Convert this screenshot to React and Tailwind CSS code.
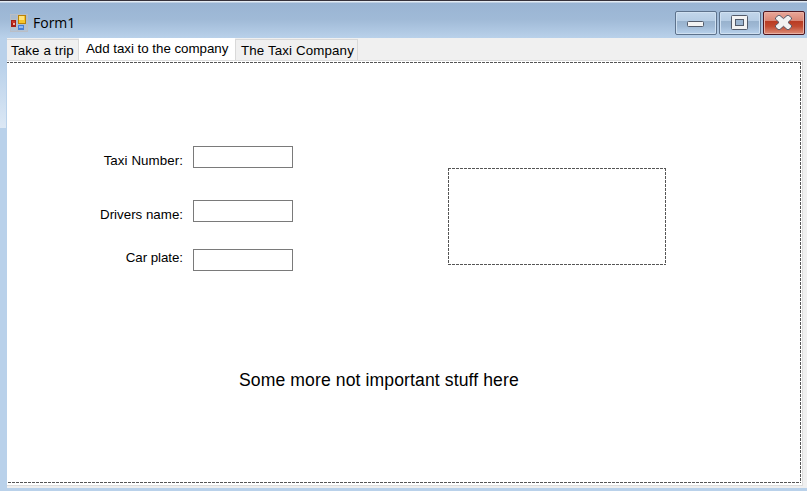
import React from "react";

const dashes =
  "bg-[linear-gradient(90deg,#555_75%,transparent_75%),linear-gradient(90deg,#555_75%,transparent_75%),linear-gradient(180deg,#555_75%,transparent_75%),linear-gradient(180deg,#555_75%,transparent_75%)] bg-[size:4px_1px,4px_1px,1px_4px,1px_4px] [background-repeat:repeat-x,repeat-x,repeat-y,repeat-y]";

function FormIcon() {
  return (
    <svg width="18" height="18" viewBox="0 0 18 18" shapeRendering="crispEdges">
      <path d="M.5 .5h7v5h-7zM.5 13.5h7v4h-7zM7.5 .5h10v17h-10z" fill="#b9bdc4" fillOpacity=".45" stroke="#b9bec6" />
      <rect x="1" y="6" width="5" height="7" fill="#a51d14" />
      <rect x="2" y="7" width="3" height="2" fill="#c93426" />
      <rect x="3" y="9" width="2" height="2" fill="#f3aaa0" />
      <rect x="8" y="1" width="8" height="9" fill="#b98107" />
      <rect x="9" y="2" width="6" height="7" fill="#f6c52c" />
      <rect x="9" y="2" width="5" height="4" fill="#ffe27a" />
      <rect x="8" y="11" width="6" height="5" fill="#477fd4" />
      <rect x="9" y="12" width="4" height="2" fill="#8bb9f8" />
    </svg>
  );
}

function CaptionButton({ close = false, label, children }) {
  return (
    <button
      aria-label={label}
      className={
        "flex h-6 w-[42px] items-start justify-start rounded-[2px] border pt-[3px] pl-[11px] " +
        (close
          ? "border-[#4d1620] bg-[linear-gradient(#e9a799,#d98675_40%,#b83b23_42%,#c14a30_65%,#dd8f7b)] shadow-[inset_0_0_0_1px_#e9b0a4]"
          : "border-[#5d728c] bg-[linear-gradient(#c2d6ea,#b5cce4_40%,#98b2cd_42%,#9fb9d5_65%,#b9d2ec)] shadow-[inset_0_0_0_1px_#cfe0f1]")
      }
    >
      {children}
    </button>
  );
}

function Field({ label, className, labelClass }) {
  return (
    <label className={"flex h-[22px] w-[286px] justify-end " + className}>
      <span className={"mr-[10px] whitespace-nowrap leading-4 " + labelClass}>{label}</span>
      <input className="h-[22px] w-[100px] border border-[#7a7a7a] bg-white outline-none" />
    </label>
  );
}

export default function App() {
  return (
    <div className="flex h-[491px] w-[807px] flex-col overflow-hidden bg-[#b9d1ea] font-['Liberation_Sans',Arial,sans-serif] text-black">
      <header className="flex h-[38px] shrink-0 border-t border-[#35313a] bg-[linear-gradient(#e4ebf3_0px,#e4ebf3_1px,#99b4d3_2px,#a0bad7_50%,#b9d1ea)] pr-[2px] pl-[10px]">
        <div className="mt-[13px] h-[18px]">
          <FormIcon />
        </div>
        <h1 className="mt-[12px] ml-[5px] font-['Open_Sans','Noto_Sans',sans-serif] text-[14px] leading-5">Form1</h1>
        <div className="mt-[10px] ml-auto flex gap-[2px]">
          <CaptionButton label="Minimize">
            <svg width="17" height="16" viewBox="0 0 17 16">
              <rect x=".5" y="6.5" width="16" height="5" rx="1" fill="#f3f3f3" stroke="#535b6a" />
            </svg>
          </CaptionButton>
          <CaptionButton label="Maximize">
            <svg width="17" height="16" viewBox="0 0 17 16">
              <rect x=".5" y=".5" width="16" height="14" rx="1" fill="#f3f3f3" stroke="#535b6a" />
              <rect x="4.5" y="4.5" width="8" height="6" fill="#9db6d1" stroke="#535b6a" />
            </svg>
          </CaptionButton>
          <CaptionButton label="Close" close>
            <svg width="18" height="16" viewBox="0 0 18 16">
              <path
                d="M3.2 .5h1.7L8.5 3.6 12.1.5h1.7l2.7 2.3v1.3L13 7.4l3.5 3.2v1.5l-2.6 2.4h-1.8l-3.6-3.2-3.6 3.2H3.1L.5 12.1v-1.5L4 7.4.5 4.1V2.8z"
                fill="#f1f1f1"
                stroke="#535666"
                strokeLinejoin="round"
              />
            </svg>
          </CaptionButton>
        </div>
      </header>

      <div className="flex h-[450px]">
        <div className="w-[7px] shrink-0">
          <div className="mt-[27px] h-[63px] w-[6px] bg-[linear-gradient(#b9d1ea,#dce8f5)]" />
        </div>
        <main className="flex w-[800px] flex-col bg-[#f0f0f0]">
          <nav className="flex h-[22px] shrink-0 text-[13.33px] whitespace-nowrap">
            <div className="mt-px h-[21px] w-[72px] border-t border-r border-[#d9d9d9] pl-1 leading-[22px] tracking-[0.12px]">Take a trip</div>
            <div className="h-[22px] w-[156px] bg-white pl-[7px] leading-[21px] tracking-[-0.03px]">Add taxi to the company</div>
            <div className="mt-px h-[21px] w-[123px] border-x border-t border-[#d9d9d9] pl-[5px] leading-[22px] tracking-[0.13px]">The Taxi Company</div>
          </nav>
          <section className="h-[426px] w-[796px] border-t border-r border-b border-[#dcdcdc] bg-white pt-px pr-px pb-[2px]">
            <div className={"flex h-[421px] w-[794px] flex-col [background-position:-1px_0,1px_100%,-1px_0,100%_0] " + dashes}>
              <div className="flex">
                <div className="flex w-[286px] flex-col pt-[84px] text-[13.33px]">
                  <Field label="Taxi Number:" labelClass="mt-[7px] tracking-[0.07px]" className="" />
                  <Field label="Drivers name:" labelClass="mt-[7px]" className="mt-8" />
                  <Field label="Car plate:" labelClass="mt-px tracking-[-0.05px]" className="mt-[27px]" />
                </div>
                <div className={"mt-[106px] ml-[155px] h-[97px] w-[218px] [background-position:0_0,0_100%,0_0,100%_0] " + dashes} />
              </div>
              <p className="mt-[99px] ml-[232px] text-[17.6px] leading-5 tracking-[0.1px] whitespace-nowrap">Some more not important stuff here</p>
            </div>
          </section>
        </main>
      </div>
    </div>
  );
}
